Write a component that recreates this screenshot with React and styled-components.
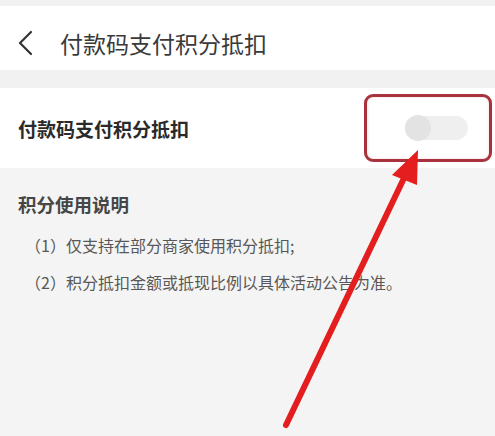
import React from "react";
import styled, { createGlobalStyle } from "styled-components";

const GlobalStyle = createGlobalStyle`
  html, body {
    margin: 0;
    padding: 0;
    background: #f4f4f4;
    font-family: "Noto Sans CJK SC", "Noto Sans", sans-serif;
  }
`;

const Page = styled.div`
  position: relative;
  width: 495px;
  height: 436px;
  overflow: hidden;
  background: #f4f4f4;
`;

const StatusStrip = styled.div`
  height: 6px;
  background: #f1f1f1;
`;

const Header = styled.div`
  height: 64px;
  box-sizing: border-box;
  padding: 10px 0 0 17px;
  background: #fff;
  display: flex;
  align-items: center;
`;

const BackButton = styled.div`
  width: 16px;
  height: 26px;
  display: flex;
`;

const HeaderTitle = styled.div`
  margin-left: 27px;
  font-size: 23px;
  line-height: 30px;
  color: #3a3a3a;
  font-weight: 400;
`;

const Band = styled.div`
  height: ${(p) => p.h}px;
  background: #f1f1f1;
`;

const Row = styled.div`
  height: 80px;
  background: #fff;
  display: flex;
  align-items: center;
  justify-content: space-between;
  padding: 0 3px 0 18px;
`;

const RowLabel = styled.div`
  font-size: 19px;
  font-weight: 700;
  color: #2a2a2a;
`;

const Highlight = styled.div`
  width: 128px;
  height: 68px;
  box-sizing: border-box;
  border: 3px solid #a8333f;
  border-radius: 9px;
  display: flex;
  align-items: center;
  padding-left: 38px;
  box-shadow: inset 0 0 3px rgba(220, 120, 130, 0.35);
`;

const Track = styled.div`
  position: relative;
  width: 63px;
  height: 24px;
  border-radius: 12px;
  background: #efefef;
`;

const Knob = styled.div`
  position: absolute;
  left: 0;
  top: -1px;
  width: 26px;
  height: 26px;
  border-radius: 50%;
  background: #e3e3e3;
`;

const Section = styled.div`
  padding: 24px 18px 0 18px;
`;

const SectionTitle = styled.div`
  font-size: 18.5px;
  line-height: 24px;
  font-weight: 700;
  color: #464646;
`;

const Notes = styled.div`
  margin-top: 17px;
  display: flex;
  flex-direction: column;
  gap: 13px;
  padding-left: 7px;
`;

const Note = styled.div`
  font-size: 16px;
  line-height: 24px;
  color: #585858;
`;

const Overlay = styled.svg`
  position: absolute;
  left: 0;
  top: 0;
  pointer-events: none;
`;

export default function App() {
  return (
    <>
      <GlobalStyle />
      <Page>
        <StatusStrip />
        <Header>
          <BackButton>
            <svg width="16" height="26" viewBox="0 0 16 26">
              <path d="M14 2 L3 13 L14 24" fill="none" stroke="#333" strokeWidth="2.2" strokeLinecap="round" strokeLinejoin="round" />
            </svg>
          </BackButton>
          <HeaderTitle>付款码支付积分抵扣</HeaderTitle>
        </Header>
        <Band h={18} />
        <Row>
          <RowLabel>付款码支付积分抵扣</RowLabel>
          <Highlight>
            <Track>
              <Knob />
            </Track>
          </Highlight>
        </Row>
        <Section>
          <SectionTitle>积分使用说明</SectionTitle>
          <Notes>
            <Note>（1）仅支持在部分商家使用积分抵扣;</Note>
            <Note>（2）积分抵扣金额或抵现比例以具体活动公告为准。</Note>
          </Notes>
        </Section>
        <Overlay width="495" height="436" viewBox="0 0 495 436">
          <line x1="286" y1="425" x2="405" y2="176" stroke="#e41e1e" strokeWidth="6" strokeLinecap="round" />
          <polygon points="418,150 392,175 417,185" fill="#e41e1e" />
        </Overlay>
      </Page>
    </>
  );
}
